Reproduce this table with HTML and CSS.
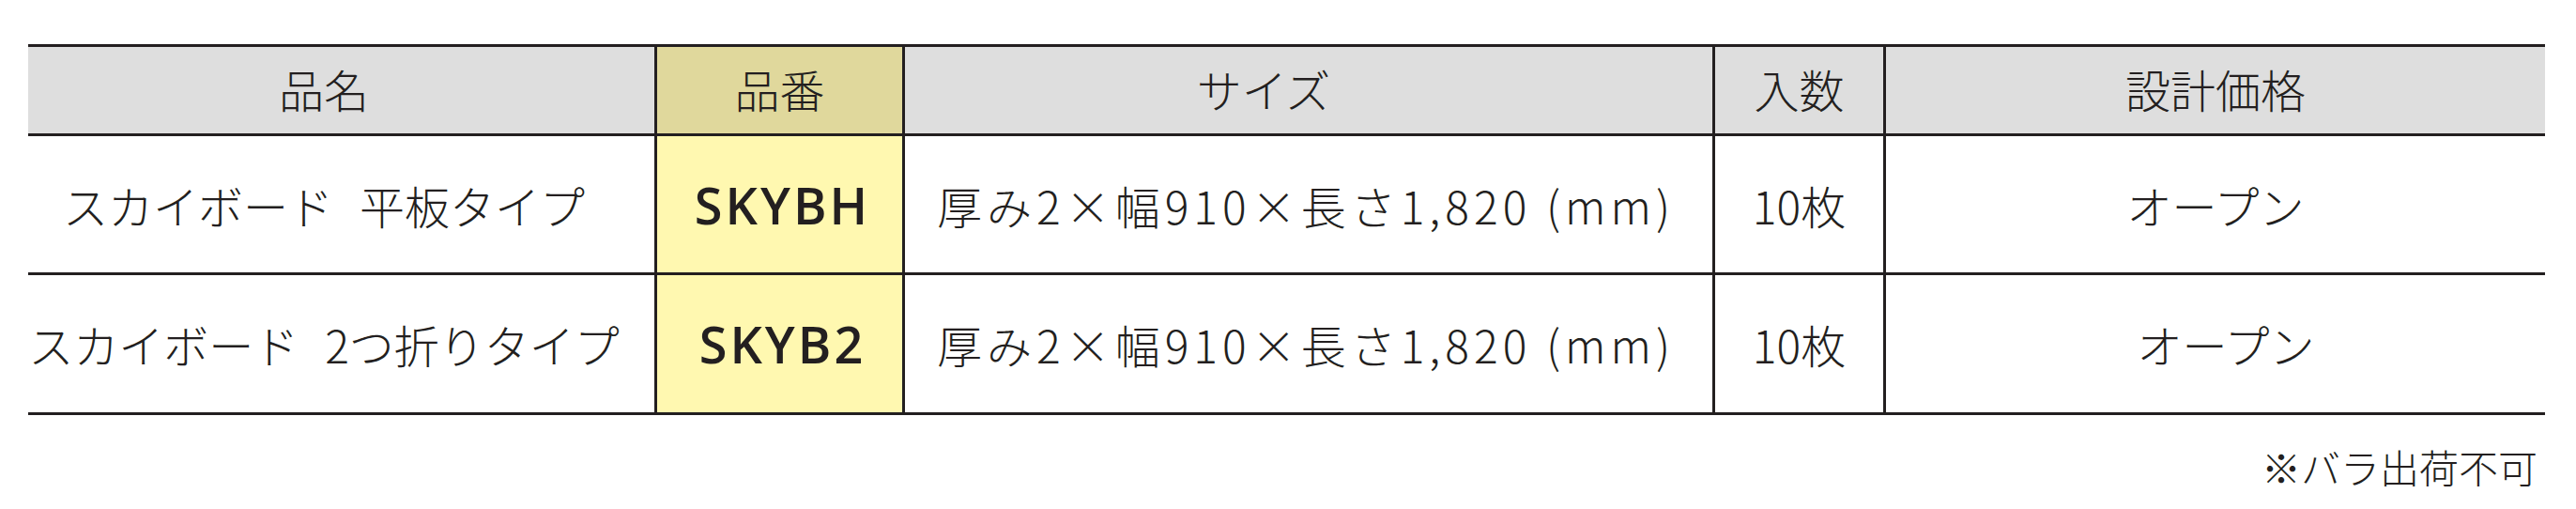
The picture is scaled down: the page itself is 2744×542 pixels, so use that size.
FILE: index.html
```html
<!DOCTYPE html>
<html lang="ja">
<head>
<meta charset="utf-8">
<title>スカイボード</title>
<link rel="stylesheet" href="styles.css">
</head>
<body>
<div class="page">
  <div class="table">
    <div class="row head">
      <div class="cell c-name">品名</div>
      <div class="cell c-code">品番</div>
      <div class="cell c-size c-size-head">サイズ</div>
      <div class="cell c-qty">入数</div>
      <div class="cell c-price">設計価格</div>
    </div>
    <div class="row body">
      <div class="cell c-name">スカイボード<span class="gap"> </span>平板タイプ</div>
      <div class="cell c-code"><span class="code">SKYBH</span></div>
      <div class="cell c-size">厚み2×幅910×長さ1,820 (mm)</div>
      <div class="cell c-qty">10枚</div>
      <div class="cell c-price">オープン</div>
    </div>
    <div class="row body">
      <div class="cell c-name">スカイボード<span class="gap"> </span>2つ折りタイプ</div>
      <div class="cell c-code"><span class="code">SKYB2</span></div>
      <div class="cell c-size">厚み2×幅910×長さ1,820 (mm)</div>
      <div class="cell c-qty">10枚</div>
      <div class="cell c-price c-price-shift">オープン</div>
    </div>
  </div>
  <p class="note">※バラ出荷不可</p>
</div>
</body>
</html>
```
FILE: styles.css
```css
html, body {
  margin: 0;
  padding: 0;
  background: #ffffff;
}
body {
  font-family: "Noto Sans CJK JP", "Noto Sans", sans-serif;
  font-weight: 300;
  color: #231f20;
}
.page {
  padding: 47px 0 0 30px;
  width: 2681px;
}
.table {
  border-top: 3px solid #231f20;
}
.row {
  display: grid;
  grid-template-columns: 670px 264px 863px 182px 702px;
  border-bottom: 3px solid #231f20;
}
.row.head {
  height: 92px;
  background: #dedede;
}
.row.body {
  height: 145px;
}
.row.body + .row.body {
  height: 146px;
}
.cell {
  display: flex;
  align-items: center;
  justify-content: center;
  border-right: 3px solid #231f20;
  font-size: 48px;
  line-height: 1;
  white-space: nowrap;
}
.cell.c-price {
  border-right: none;
}
.head .cell {
  padding-bottom: 4px;
}
.c-name {
  padding-right: 37px;
}
.gap {
  display: inline-block;
  width: 28px;
}
.c-code {
  background: #fff8b0;
}
.head .c-code {
  background: #e0d89c;
}
.code {
  font-family: "Open Sans", "Noto Sans", sans-serif;
  font-weight: 600;
  font-size: 54px;
  letter-spacing: 3px;
  margin-left: 6px;
}
.c-size {
  letter-spacing: 5px;
  padding-right: 6px;
}
.c-size-head {
  padding-right: 96px;
  letter-spacing: 0;
}
.c-price-shift {
  padding-left: 22px;
}
.note {
  margin: 34px 8px 0 0;
  text-align: right;
  font-size: 42px;
  line-height: 1;
}
```
